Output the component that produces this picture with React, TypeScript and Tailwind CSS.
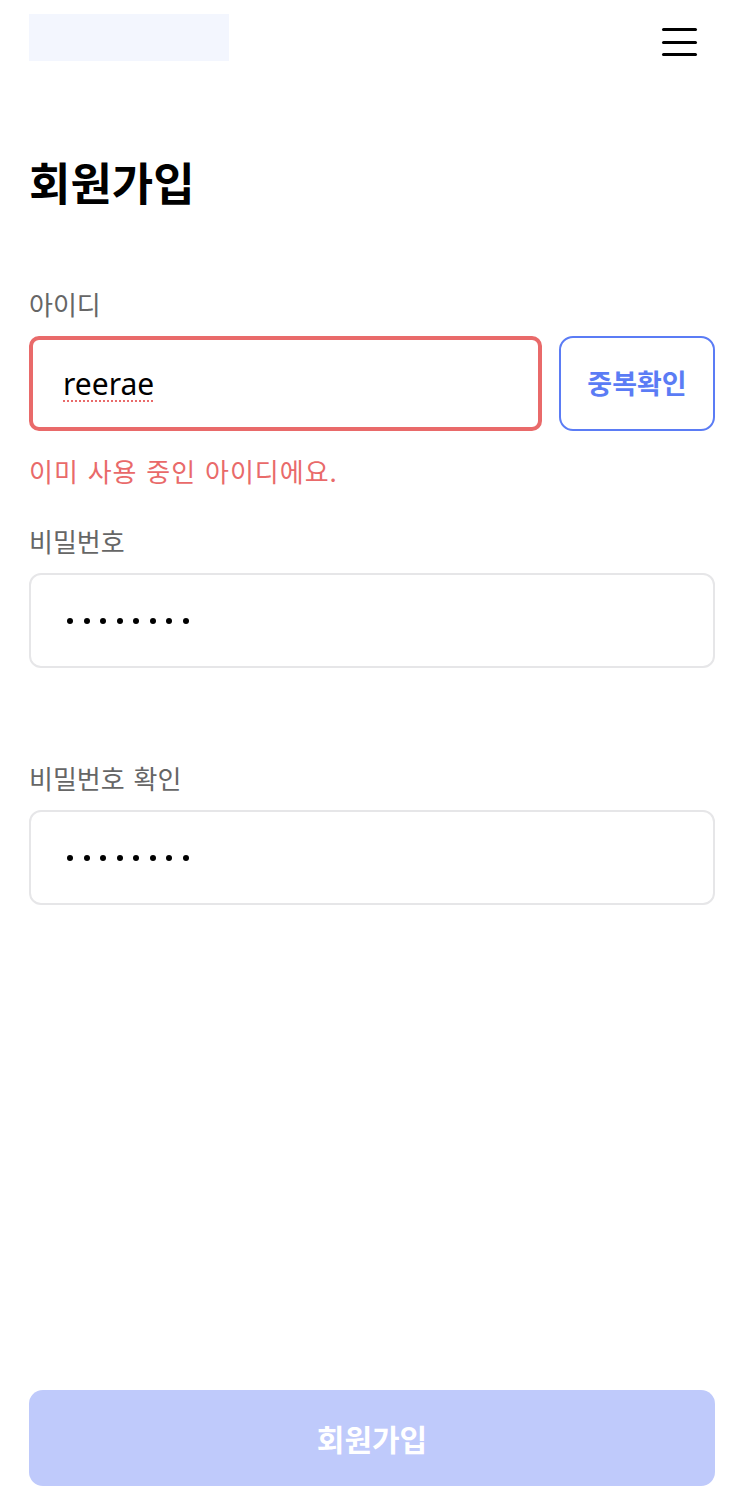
import React from "react";

const font = { fontFamily: '"Noto Sans CJK KR", "Noto Sans", sans-serif' };

function Dots() {
  return (
    <div className="flex items-center gap-[10.5px]">
      {Array.from({ length: 8 }).map((_, i) => (
        <span key={i} className="block h-[6px] w-[6px] rounded-full bg-black" />
      ))}
    </div>
  );
}

function Field({
  label,
  children,
  error,
}: {
  label: string;
  children: React.ReactNode;
  error?: string;
}) {
  return (
    <div className="flex flex-col">
      <label className="text-[26px] leading-[32px] text-[#666666] [word-spacing:3px]">{label}</label>
      <div className="mt-[16px]">{children}</div>
      <div className="h-[94px] pt-[24px]">
        {error && (
          <p className="text-[26px] leading-[32px] tracking-[1px] text-[#e96a6a] [word-spacing:2px]">
            {error}
          </p>
        )}
      </div>
    </div>
  );
}

export default function App() {
  return (
    <div className="flex min-h-screen flex-col bg-white pl-[29px] pr-[33px]" style={font}>
      {/* header */}
      <header className="flex items-start justify-between pt-[14px]">
        <div className="h-[47px] w-[200px] bg-[#f3f6fe]" />
        <button className="mr-[18px] mt-[14px] flex w-[35px] flex-col gap-[9.5px]">
          <span className="block h-[3px] w-full rounded-full bg-black" />
          <span className="block h-[3px] w-full rounded-full bg-black" />
          <span className="block h-[3px] w-full rounded-full bg-black" />
        </button>
      </header>

      <h1 className="mt-[94px] text-[45px] font-bold leading-[54px] text-black">회원가입</h1>

      <div className="mt-[79px] flex flex-col">
        <Field label="아이디" error="이미 사용 중인 아이디에요.">
          <div className="flex gap-[17px]">
            <div className="flex h-[95px] flex-1 items-center rounded-[10px] border-[4px] border-[#e96a6a] pl-[30px]">
              <span
                className="text-[30px] leading-none text-black underline decoration-[#e96a6a] decoration-dotted decoration-2 underline-offset-[6px]"
                style={{ fontFamily: '"Noto Sans", sans-serif' }}
              >
                reerae
              </span>
            </div>
            <button className="h-[95px] w-[156px] rounded-[14px] border-2 border-[#5b7cf5] text-[27px] font-bold text-[#5b7cf5]">
              중복확인
            </button>
          </div>
        </Field>

        <Field label="비밀번호">
          <div className="flex h-[95px] items-center rounded-[12px] border-2 border-[#e6e6e8] pl-[36px]">
            <Dots />
          </div>
        </Field>

        <Field label="비밀번호 확인">
          <div className="flex h-[95px] items-center rounded-[12px] border-2 border-[#e6e6e8] pl-[36px]">
            <Dots />
          </div>
        </Field>
      </div>

      <div className="mt-auto pb-[20px]">
        <button className="h-[96px] w-full rounded-[14px] bg-[#bfcafb] text-[30px] font-bold text-white">
          회원가입
        </button>
      </div>
    </div>
  );
}
